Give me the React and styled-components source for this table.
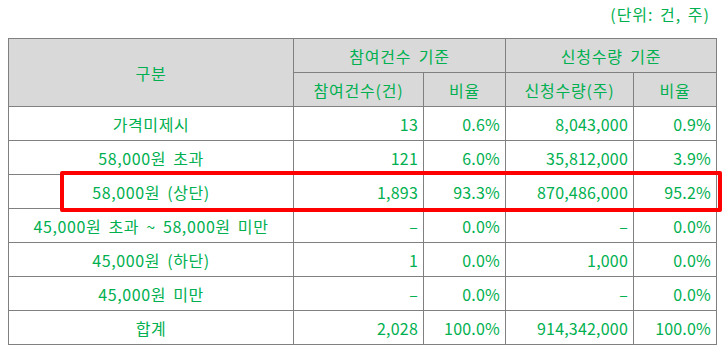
import React from 'react';
import styled, { createGlobalStyle } from 'styled-components';

const GlobalStyle = createGlobalStyle`
  html, body {
    margin: 0;
    padding: 0;
    background: #ffffff;
  }
  body {
    font-family: "Noto Sans CJK KR", "Noto Sans", sans-serif;
  }
`;

const Page = styled.div`
  width: 727px;
  padding: 0 11px 0 8px;
  box-sizing: border-box;
  color: #00b050;
  font-size: 16px;
`;

const UnitLine = styled.div`
  height: 28px;
  margin-bottom: 10px;
  display: flex;
  align-items: center;
  justify-content: flex-end;
  padding-right: 6px;
  letter-spacing: 1px;
  word-spacing: 2px;
`;

const TableWrap = styled.div`
  position: relative;
`;

const Table = styled.table`
  width: 708px;
  border-collapse: collapse;
  table-layout: fixed;
  border: 1px solid #000000;
`;

const HeadCell = styled.th`
  height: 33px;
  padding: 0;
  background: #d9d9d9;
  border: 1px solid #808080;
  font-weight: 400;
  text-align: center;
  letter-spacing: 0.8px;
  word-spacing: 3px;
`;

const Cell = styled.td`
  height: 33px;
  padding: ${({ $align }) => ($align === 'center' ? '0' : '0 5px 0 0')};
  border: 1px solid #808080;
  text-align: ${({ $align }) => $align || 'right'};
  letter-spacing: ${({ $align }) => ($align === 'center' ? '0.6px' : '0.2px')};
  word-spacing: 3px;
  white-space: nowrap;
`;

const Highlight = styled.div`
  position: absolute;
  left: 52px;
  top: 133px;
  width: 662px;
  height: 41px;
  box-sizing: border-box;
  border: 4px solid #ff0000;
  border-radius: 2px;
  pointer-events: none;
`;

const rows = [
  ['가격미제시', '13', '0.6%', '8,043,000', '0.9%'],
  ['58,000원 초과', '121', '6.0%', '35,812,000', '3.9%'],
  ['58,000원 (상단)', '1,893', '93.3%', '870,486,000', '95.2%'],
  ['45,000원 초과 ~ 58,000원 미만', '–', '0.0%', '–', '0.0%'],
  ['45,000원 (하단)', '1', '0.0%', '1,000', '0.0%'],
  ['45,000원 미만', '–', '0.0%', '–', '0.0%'],
  ['합계', '2,028', '100.0%', '914,342,000', '100.0%'],
];

export default function App() {
  return (
    <Page>
      <GlobalStyle />
      <UnitLine>(단위: 건, 주)</UnitLine>
      <TableWrap>
        <Table>
          <colgroup>
            <col style={{ width: 285 }} />
            <col style={{ width: 130 }} />
            <col style={{ width: 82 }} />
            <col style={{ width: 128 }} />
            <col style={{ width: 83 }} />
          </colgroup>
          <thead>
            <tr>
              <HeadCell rowSpan={2}>구분</HeadCell>
              <HeadCell colSpan={2}>참여건수 기준</HeadCell>
              <HeadCell colSpan={2}>신청수량 기준</HeadCell>
            </tr>
            <tr>
              <HeadCell>참여건수(건)</HeadCell>
              <HeadCell>비율</HeadCell>
              <HeadCell>신청수량(주)</HeadCell>
              <HeadCell>비율</HeadCell>
            </tr>
          </thead>
          <tbody>
            {rows.map((r) => (
              <tr key={r[0]}>
                <Cell $align="center">{r[0]}</Cell>
                <Cell>{r[1]}</Cell>
                <Cell>{r[2]}</Cell>
                <Cell>{r[3]}</Cell>
                <Cell>{r[4]}</Cell>
              </tr>
            ))}
          </tbody>
        </Table>
        <Highlight />
      </TableWrap>
    </Page>
  );
}
